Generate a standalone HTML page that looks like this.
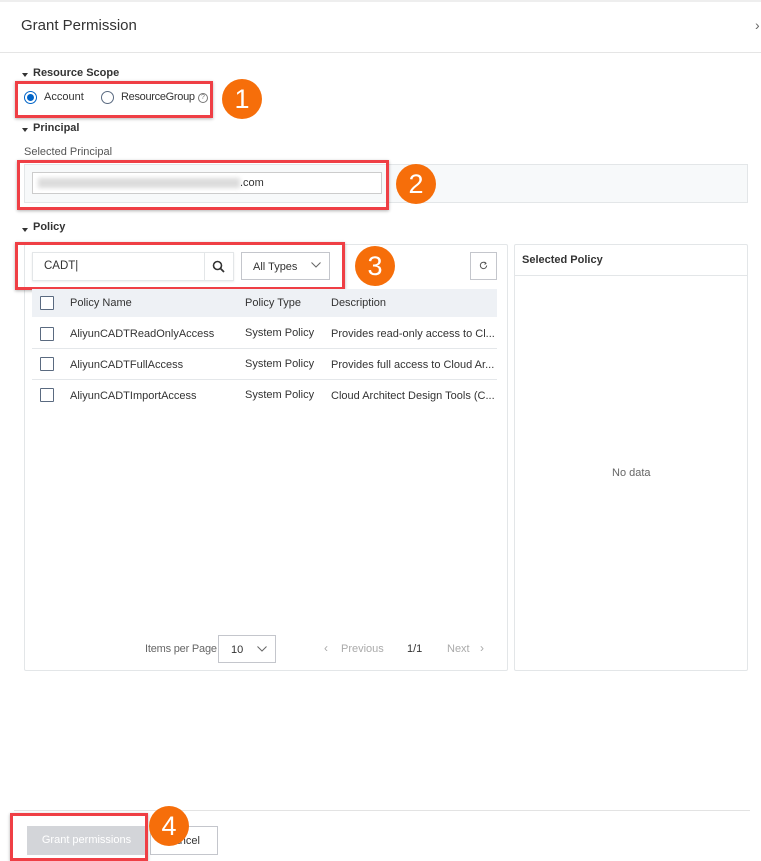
<!DOCTYPE html>
<html><head><meta charset="utf-8"><style>
*{box-sizing:border-box;margin:0;padding:0}
body{width:761px;height:861px;position:relative;overflow:hidden;background:#fff;font-family:"Liberation Sans",sans-serif;color:#333;font-size:11px}
.a{position:absolute}
.h{font-weight:bold;font-size:11px;color:#333}
.tri{position:absolute;width:0;height:0;border-left:3px solid transparent;border-right:3px solid transparent;border-top:4px solid #333}
.red{position:absolute;border:3px solid #ef3f45;box-shadow:0 1px 3px rgba(0,0,0,.3)}
.num{position:absolute;width:40px;height:40px;border-radius:50%;background:#f66e0a;color:#fff;font-size:27px;text-align:center;line-height:40px}
.cb{position:absolute;width:14px;height:14px;border:1px solid #5a6a80;border-radius:1px;background:#fff}
.row{position:absolute;left:32px;width:465px;height:31px;border-bottom:1px solid #e4e7ea}
.row span{position:absolute;top:10px}
</style></head><body>
<div class="a" style="left:0;top:0;width:761px;height:2px;background:#eee"></div>
<div class="a" style="left:21px;top:17px;font-size:15px;color:#333">Grant Permission</div>
<div class="a" style="left:755px;top:17px;font-size:14px;color:#666">›</div>
<div class="a" style="left:0;top:52px;width:761px;height:1px;background:#e5e5e5"></div>

<div class="tri" style="left:22px;top:73px"></div>
<div class="a h" style="left:33px;top:67px">Resource Scope</div>
<div class="a" style="left:24px;top:91px;width:13px;height:13px;border-radius:50%;border:1px solid #0064c8"></div>
<div class="a" style="left:27px;top:94px;width:7px;height:7px;border-radius:50%;background:#0064c8"></div>
<div class="a" style="left:44px;top:91px">Account</div>
<div class="a" style="left:101px;top:91px;width:13px;height:13px;border-radius:50%;border:1px solid #5a6a80"></div>
<div class="a" style="left:121px;top:91px;letter-spacing:-0.3px">ResourceGroup</div>
<div class="a" style="left:198px;top:93px;width:10px;height:10px;border-radius:50%;border:1px solid #777;font-size:7px;text-align:center;line-height:8px;color:#777">?</div>
<div class="red" style="left:15px;top:81px;width:198px;height:37px"></div>
<div class="num" style="left:222px;top:79px">1</div>

<div class="tri" style="left:22px;top:128px"></div>
<div class="a h" style="left:33px;top:122px">Principal</div>
<div class="a" style="left:24px;top:146px;color:#555">Selected Principal</div>
<div class="a" style="left:24px;top:164px;width:724px;height:39px;background:#f7f9fa;border:1px solid #e3e6e8"></div>
<div class="a" style="left:32px;top:172px;width:350px;height:22px;background:#fff;border:1px solid #ccc"></div>
<div class="a" style="left:38px;top:178px;width:202px;height:10px;background:#dcdcdc;filter:blur(2px)"></div>
<div class="a" style="left:240px;top:177px">.com</div>
<div class="red" style="left:17px;top:160px;width:372px;height:50px"></div>
<div class="num" style="left:396px;top:164px">2</div>

<div class="tri" style="left:22px;top:228px"></div>
<div class="a h" style="left:33px;top:221px">Policy</div>

<div class="a" style="left:24px;top:244px;width:484px;height:427px;border:1px solid #e3e6e8;border-radius:2px"></div>
<div class="a" style="left:514px;top:244px;width:234px;height:427px;border:1px solid #e3e6e8;border-radius:2px"></div>
<div class="a h" style="left:522px;top:254px">Selected Policy</div>
<div class="a" style="left:515px;top:275px;width:232px;height:1px;background:#e3e6e8"></div>
<div class="a" style="left:612px;top:467px;color:#666">No data</div>

<div class="a" style="left:32px;top:252px;width:202px;height:29px;border:1px solid #e3e6e8;box-shadow:0 1px 2px rgba(0,0,0,.08)"></div>
<div class="a" style="left:204px;top:252px;width:1px;height:29px;background:#e3e6e8"></div>
<div class="a" style="left:44px;top:260px;font-size:11.5px">CADT|</div>
<svg class="a" style="left:212px;top:260px" width="13" height="13" viewBox="0 0 13 13"><circle cx="5.5" cy="5.5" r="4" fill="none" stroke="#333" stroke-width="1.6"/><path d="M8.5 8.5L12 12" stroke="#333" stroke-width="1.8"/></svg>
<div class="a" style="left:241px;top:252px;width:89px;height:28px;border:1px solid #c4c6cc"></div>
<div class="a" style="left:253px;top:261px">All Types</div>
<svg class="a" style="left:311px;top:262px" width="10" height="6"><path d="M0.5 0.5L5 5L9.5 0.5" fill="none" stroke="#666"/></svg>
<div class="a" style="left:470px;top:252px;width:27px;height:28px;border:1px solid #c4c6cc"></div>
<svg class="a" style="left:479px;top:261px" width="9" height="9"><path d="M6.8 2.2A3.2 3.2 0 1 0 7.7 4.5" fill="none" stroke="#555" stroke-width="1"/><path d="M5.5 1L7 2.3L5.6 3.5" fill="none" stroke="#555"/></svg>
<div class="red" style="left:15px;top:242px;width:330px;height:48px"></div>
<div class="num" style="left:355px;top:246px">3</div>

<div class="a" style="left:32px;top:289px;width:465px;height:28px;background:#eef1f5"></div>
<div class="cb" style="left:40px;top:296px"></div>
<div class="a" style="left:70px;top:297px">Policy Name</div>
<div class="a" style="left:245px;top:297px">Policy Type</div>
<div class="a" style="left:331px;top:297px">Description</div>
<div class="row" style="top:318px"><span class="cb" style="left:8px;top:9px"></span><span style="left:38px">AliyunCADTReadOnlyAccess</span><span style="left:213px;top:9px">System Policy</span><span style="left:299px">Provides read-only access to Cl...</span></div>
<div class="row" style="top:349px"><span class="cb" style="left:8px;top:8px"></span><span style="left:38px">AliyunCADTFullAccess</span><span style="left:213px;top:9px">System Policy</span><span style="left:299px">Provides full access to Cloud Ar...</span></div>
<div class="row" style="top:380px;border:none"><span class="cb" style="left:8px;top:8px"></span><span style="left:38px">AliyunCADTImportAccess</span><span style="left:213px;top:9px">System Policy</span><span style="left:299px">Cloud Architect Design Tools (C...</span></div>

<div class="a" style="left:145px;top:643px;color:#666;letter-spacing:-0.2px">Items per Page</div>
<div class="a" style="left:218px;top:635px;width:58px;height:28px;border:1px solid #c4c6cc"></div>
<div class="a" style="left:231px;top:644px">10</div>
<svg class="a" style="left:257px;top:646px" width="10" height="6"><path d="M0.5 0.5L5 5L9.5 0.5" fill="none" stroke="#666"/></svg>
<div class="a" style="left:324px;top:641px;color:#aaa;font-size:12px">‹</div>
<div class="a" style="left:341px;top:643px;color:#aaa">Previous</div>
<div class="a" style="left:407px;top:643px">1/1</div>
<div class="a" style="left:447px;top:643px;color:#aaa">Next</div>
<div class="a" style="left:480px;top:641px;color:#aaa;font-size:12px">›</div>

<div class="a" style="left:14px;top:810px;width:736px;height:1px;background:#e3e3e3"></div>
<div class="a" style="left:27px;top:826px;width:119px;height:29px;background:#d3d5d9;color:#fff;text-align:center;line-height:29px;font-size:11px">Grant permissions</div>
<div class="a" style="left:150px;top:826px;width:68px;height:29px;border:1px solid #c4c6cc;text-align:right;padding-right:17px;line-height:28px;color:#333">Cancel</div>
<div class="red" style="left:10px;top:813px;width:138px;height:48px"></div>
<div class="num" style="left:149px;top:806px">4</div>
</body></html>
